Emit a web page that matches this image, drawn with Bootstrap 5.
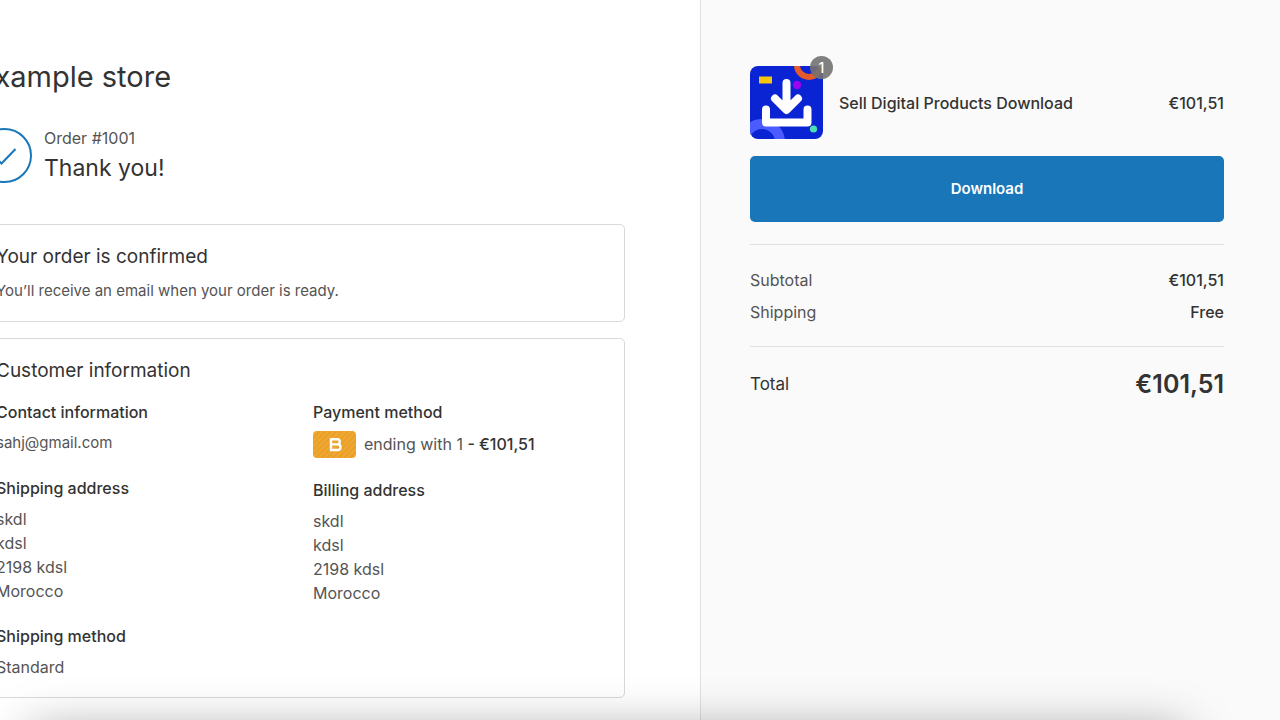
<!DOCTYPE html>
<html lang="en">
<head>
<meta charset="utf-8">
<meta name="viewport" content="width=device-width, initial-scale=1">
<title>Thank you! - Example store</title>
<link href="https://cdn.jsdelivr.net/npm/bootstrap@5.3.0/dist/css/bootstrap.min.css" rel="stylesheet">
<script defer src="https://cdn.jsdelivr.net/npm/bootstrap@5.3.0/dist/js/bootstrap.bundle.min.js"></script>
<style>
  body { font-family: Inter, "Liberation Sans", sans-serif; font-size: 16px; line-height: 24px; color: #545454; }
  .checkout { min-height: 100vh; }
  .order-main { flex: 0 0 calc(55% - 4px); padding: 59px 75px 22px 0; }
  .order-inner { margin-left: -23px; }
  .order-side { background: #fafafa; border-left: 1px solid #e1e1e1; padding: 66px 56px 0 49px; min-width: 0; }
  .ink { color: #333; }
  .store-name { font-size: 29px; line-height: 36px; margin-bottom: 31px; }
  .thanks { font-size: 23px; line-height: 32px; margin-top: 2px; }
  .order-head { margin-bottom: 40px; }
  .panel { border: 1px solid #d9d9d9; border-radius: 5px; padding: 20px 18px 18px; }
  .panel-title { font-size: 19px; line-height: 24px; margin-bottom: 17px; }
  .panel-title.tight { margin-bottom: 10px; }
  .note { font-size: 15px; }
  .label-title { font-size: 16px; line-height: 24px; font-weight: 500; margin-bottom: 7px; }
  .block { margin-bottom: 21px; }
  .pay-row { height: 26px; }
  .thumb { width: 73px; height: 73px; }
  .count { width: 23px; height: 23px; top: -10px; right: -10px; background: rgba(114,114,114,.9); font-size: 14px; font-weight: 500; }
  .line-item { margin-bottom: 17px; }
  .btn-download { height: 66px; background: #1977b9; border: 0; border-radius: 5px; font-size: 15px; font-weight: 600; }
  .btn-download:hover { background: #16699f; }
  .sum { border-top: 1px solid #e1e1e1; padding: 23px 0 22px; }
  .sum:first-of-type { margin-top: 22px; }
  .sum-total { padding-top: 21px; }
  .total-label { font-size: 17px; }
  .total-price { font-size: 25px; line-height: 32px; font-weight: 600; }
  .dock-shadow { left: 30px; right: 95px; bottom: -52px; height: 40px; box-shadow: 0 0 50px rgba(0,0,0,.4); pointer-events: none; }
</style>
</head>
<body class="overflow-x-hidden">
<div class="checkout d-flex overflow-hidden">
  <main class="order-main">
    <div class="order-inner">
      <h1 class="store-name ink fw-normal">Example store</h1>
      <div class="order-head d-flex align-items-center">
        <svg class="flex-shrink-0" width="55" height="55" viewBox="0 0 55 55" fill="none" stroke="#1977b9" stroke-width="2" aria-hidden="true"><circle cx="27.500" cy="27.500" r="26.500"/><path d="M17 28l7.500 7.500L38.500 21"/></svg>
        <div class="ms-2 ps-1">
          <div>Order #1001</div>
          <h2 class="thanks ink fw-normal mb-0">Thank you!</h2>
        </div>
      </div>
      <section class="panel mb-3">
        <h2 class="panel-title tight ink fw-normal">Your order is confirmed</h2>
        <p class="note mb-0">You’ll receive an email when your order is ready.</p>
      </section>
      <section class="panel">
        <h2 class="panel-title ink fw-normal">Customer information</h2>
        <div class="row gx-4">
          <div class="col-6">
            <h3 class="label-title ink">Contact information</h3>
            <p class="block note">sahj@gmail.com</p>
            <h3 class="label-title ink">Shipping address</h3>
            <address class="block">skdl<br>kdsl<br>2198 kdsl<br>Morocco</address>
            <h3 class="label-title ink">Shipping method</h3>
            <p class="mb-0">Standard</p>
          </div>
          <div class="col-6">
            <h3 class="label-title ink">Payment method</h3>
            <div class="block pay-row d-flex align-items-center gap-2">
              <svg width="43" height="27" viewBox="0 0 43 27" role="img" aria-label="Bogus card">
                <defs><pattern id="stripes" width="4" height="4" patternUnits="userSpaceOnUse" patternTransform="rotate(45)"><rect width="4" height="4" fill="#efa830"/><rect width="2" height="4" fill="#e99f29"/></pattern></defs>
                <rect width="43" height="27" rx="4" fill="url(#stripes)"/>
                <path d="M18 8.200h6.200a2.600 2.600 0 010 5.200H18zm0 5.200h6.700a2.800 2.800 0 010 5.600H18z" fill="none" stroke="#fff" stroke-width="2.400"/>
              </svg>
              <span>ending with 1 <span class="ink fw-medium">- €101,51</span></span>
            </div>
            <h3 class="label-title ink">Billing address</h3>
            <address class="mb-0">skdl<br>kdsl<br>2198 kdsl<br>Morocco</address>
          </div>
        </div>
      </section>
    </div>
  </main>
  <aside class="order-side flex-grow-1">
    <article class="line-item d-flex align-items-center ink fw-medium">
      <div class="position-relative flex-shrink-0 me-3">
        <svg class="thumb d-block" viewBox="0 0 73 73" role="img" aria-label="Download icon">
          <defs><clipPath id="tile"><rect width="73" height="73" rx="8"/></clipPath></defs>
          <g clip-path="url(#tile)">
            <rect width="73" height="73" fill="#0b24d3"/>
            <circle cx="59" cy="-1" r="12" fill="none" stroke="#e55a2b" stroke-width="6"/>
            <circle cx="12" cy="76" r="18" fill="none" stroke="#4a5cff" stroke-width="10"/>
            <rect x="9" y="10.500" width="13" height="7" fill="#f5c60a"/>
            <circle cx="47" cy="19" r="4.200" fill="#9b06ee"/>
            <circle cx="63.500" cy="63" r="3.600" fill="#4be0b4"/>
            <path d="M36.500 17v26M25 32.500l11.500 11.500L48 32.500M16 43.500V56.500H57.500V43.500" fill="none" stroke="#fff" stroke-width="8" stroke-linecap="round" stroke-linejoin="round"/>
            <path d="M31 34h11l-5.500 8z" fill="#fff"/>
          </g>
        </svg>
        <span class="count position-absolute rounded-circle text-white d-flex align-items-center justify-content-center">1</span>
      </div>
      <span class="flex-grow-1">Sell Digital Products Download</span>
      <span>€101,51</span>
    </article>
    <button type="button" class="btn btn-primary btn-download w-100 d-block">Download</button>
    <section class="sum">
      <div class="d-flex justify-content-between mb-2"><span>Subtotal</span><span class="ink fw-medium">€101,51</span></div>
      <div class="d-flex justify-content-between"><span>Shipping</span><span class="ink fw-medium">Free</span></div>
    </section>
    <section class="sum sum-total ink d-flex justify-content-between align-items-center">
      <span class="total-label">Total</span><span class="total-price">€101,51</span>
    </section>
  </aside>
</div>
<div class="dock-shadow position-fixed"></div>
</body>
</html>
